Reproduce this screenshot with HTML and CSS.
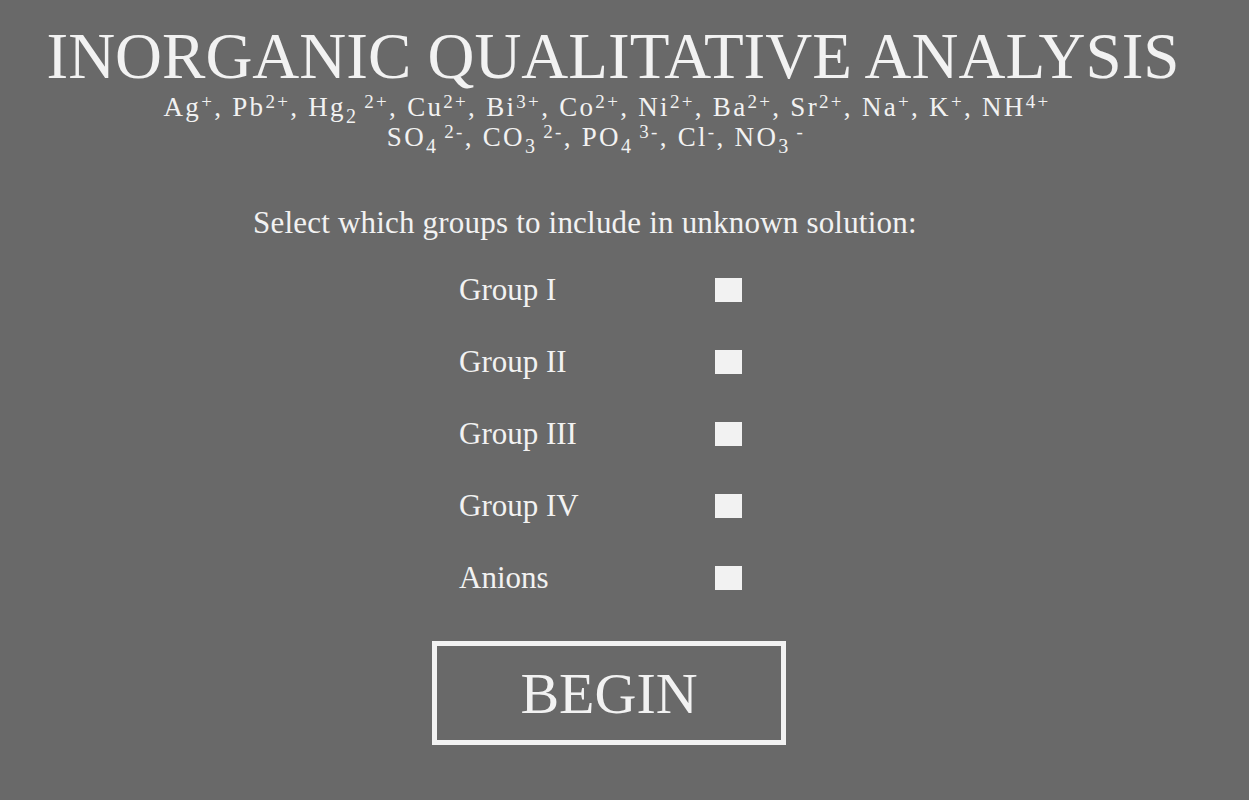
FILE: index.html
```html
<!DOCTYPE html>
<html>
<head>
<meta charset="utf-8">
<title>Inorganic Qualitative Analysis</title>
<link rel="stylesheet" href="styles.css">
</head>
<body>
<header class="head">
  <h1 class="title">INORGANIC QUALITATIVE ANALYSIS</h1>
  <p class="ions ions-cat">Ag<sup>+</sup>, Pb<sup>2+</sup>, Hg<sub>2</sub><sup class="after-sub">2+</sup>, Cu<sup>2+</sup>, Bi<sup>3+</sup>, Co<sup>2+</sup>, Ni<sup>2+</sup>, Ba<sup>2+</sup>, Sr<sup>2+</sup>, Na<sup>+</sup>, K<sup>+</sup>, NH<sup>4+</sup></p>
  <p class="ions ions-an">SO<sub>4</sub><sup class="after-sub">2-</sup>, CO<sub>3</sub><sup class="after-sub">2-</sup>, PO<sub>4</sub><sup class="after-sub">3-</sup>, Cl<sup>-</sup>, NO<sub>3</sub><sup class="after-sub">-</sup></p>
</header>
<main class="form">
  <p class="prompt">Select which groups to include in unknown solution:</p>
  <div class="groups">
    <label class="group-label" for="g1">Group I</label><input class="box" type="checkbox" id="g1">
    <label class="group-label" for="g2">Group II</label><input class="box" type="checkbox" id="g2">
    <label class="group-label" for="g3">Group III</label><input class="box" type="checkbox" id="g3">
    <label class="group-label" for="g4">Group IV</label><input class="box" type="checkbox" id="g4">
    <label class="group-label" for="g5">Anions</label><input class="box" type="checkbox" id="g5">
  </div>
  <button class="begin" type="button">BEGIN</button>
</main>
</body>
</html>
```

FILE: styles.css
```css
html, body {
  margin: 0;
  padding: 0;
}
body {
  background: #696969;
  color: #f2f2f2;
  font-family: "Liberation Serif", "Times New Roman", serif;
  width: 1249px;
  height: 800px;
  overflow: hidden;
}
.head {
  padding-top: 24px;
  padding-right: 23px;
}
.title {
  margin: 0;
  text-align: center;
  font-weight: normal;
  font-size: 65px;
  line-height: 65px;
}
.ions {
  margin: 0;
  text-align: center;
  font-size: 27px;
  line-height: 30px;
  letter-spacing: 2.3px;
}
.ions-cat {
  padding-top: 3px;
  padding-right: 12px;
}
.ions-an {
  padding-right: 34px;
}
.ions sup {
  font-size: 19px;
  vertical-align: 8px;
  line-height: 0;
}
.ions sub {
  font-size: 20px;
  vertical-align: -7px;
  line-height: 0;
}
.ions .after-sub {
  margin-left: 6px;
}
.form {
  padding-top: 53px;
}
.prompt {
  margin: 0 0 0 253px;
  font-size: 31px;
  line-height: 36px;
  letter-spacing: 0.2px;
}
.groups {
  margin: 37px 0 0 459px;
  display: grid;
  grid-template-columns: 256px 27px;
  grid-auto-rows: 24px;
  row-gap: 48px;
  align-items: center;
}
.group-label {
  font-size: 31px;
  line-height: 24px;
}
.box {
  appearance: none;
  -webkit-appearance: none;
  margin: 0;
  width: 27px;
  height: 24px;
  background: #f2f2f2;
  border: none;
  border-radius: 0;
}
.begin {
  display: block;
  margin: 51px 0 0 432px;
  width: 354px;
  height: 104px;
  box-sizing: border-box;
  border: 5px solid #f2f2f2;
  background: transparent;
  color: #f2f2f2;
  font-family: "Liberation Serif", "Times New Roman", serif;
  font-size: 58px;
  padding: 0;
}
```
